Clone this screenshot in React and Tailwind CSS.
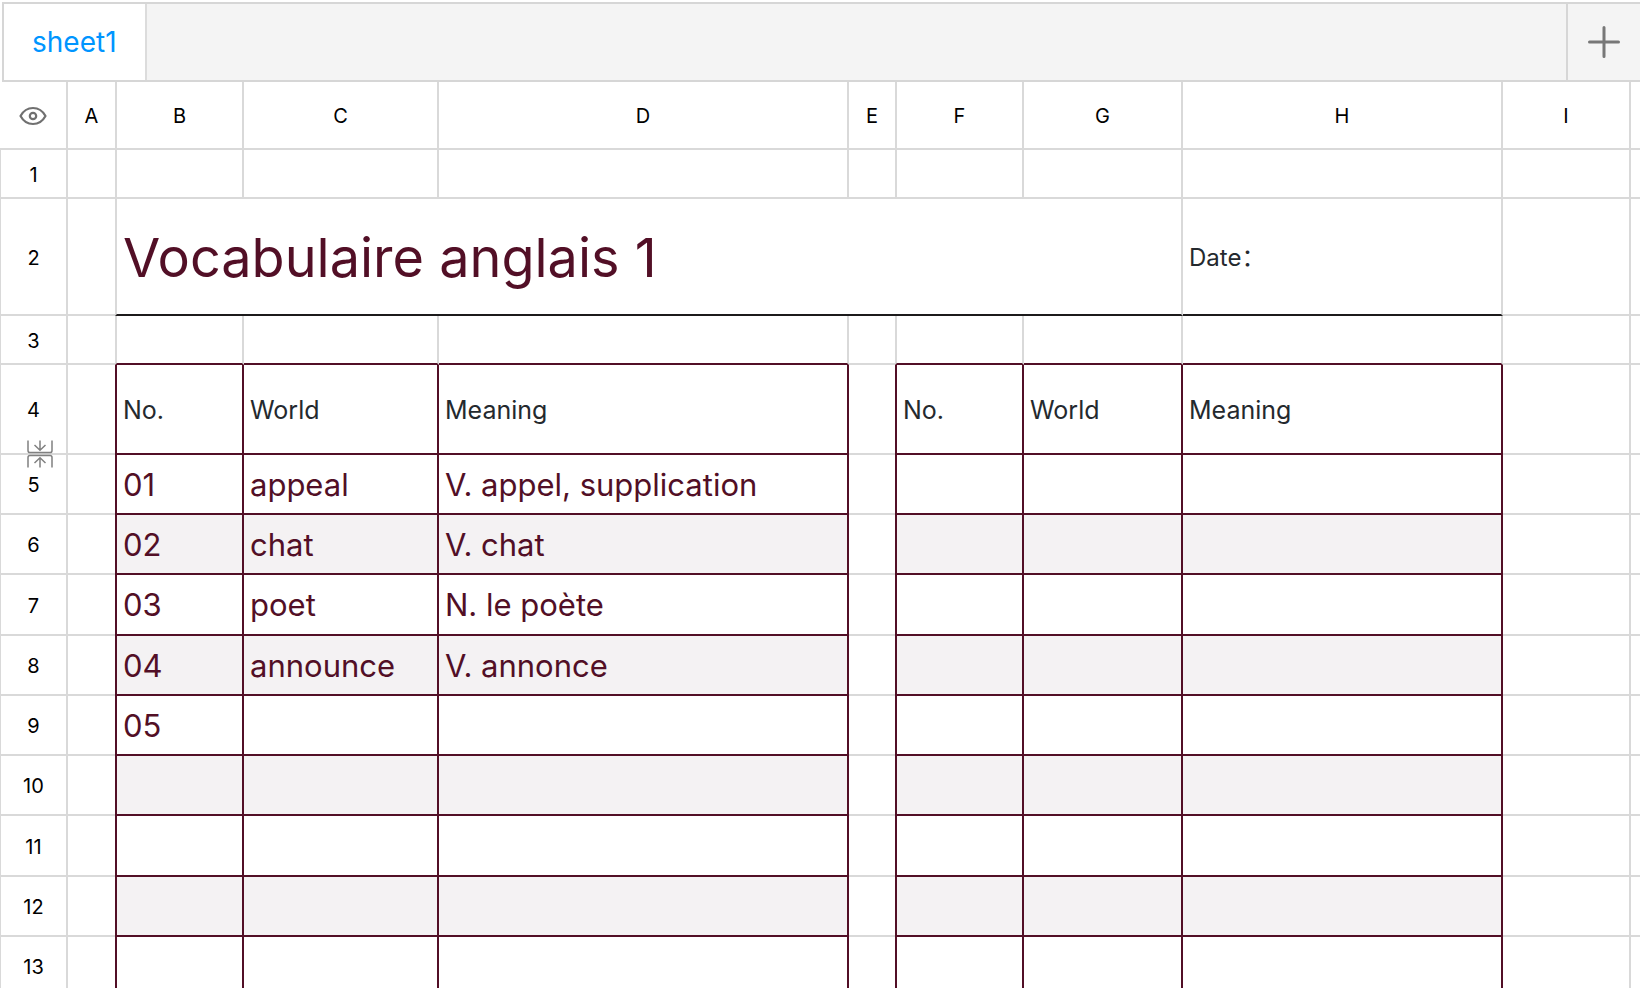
import { useState } from "react";

const columns = [
  { id: "A", width: 47 },
  { id: "B", width: 129 },
  { id: "C", width: 195 },
  { id: "D", width: 410 },
  { id: "E", width: 46 },
  { id: "F", width: 129 },
  { id: "G", width: 159 },
  { id: "H", width: 320 },
  { id: "I", width: 128 },
  { id: "", width: 120 },
];

const rowHeights = [49, 117, 49, 90, 60, 60, 61, 60, 60, 60, 61, 60, 60];

const cells = {
  B4: "No.",
  C4: "World",
  D4: "Meaning",
  F4: "No.",
  G4: "World",
  H4: "Meaning",
  B5: "01",
  C5: "appeal",
  D5: "V. appel, supplication",
  B6: "02",
  C6: "chat",
  D6: "V. chat",
  B7: "03",
  C7: "poet",
  D7: "N. le poète",
  B8: "04",
  C8: "announce",
  D8: "V. annonce",
  B9: "05",
};

const isListColumn = (col) => col !== "" && "BCDFGH".includes(col);

// B and F open a word list, so they own the line on their left; A and E leave it out
function edgeClass(col) {
  if (col === "A" || col === "E") return "border-b-2";
  if (col === "B" || col === "F") return "border-x-2 border-b-2";
  return "border-r-2 border-b-2";
}

function colorClass(col, row) {
  const list = isListColumn(col);
  let cls = "border-[#d9d9d9]";

  if (list && row >= 4) cls = "border-[#520f26]";
  if (list && row === 3) cls += " border-b-[#520f26]";
  if (list && row > 4 && row % 2 === 0) cls += " bg-[#f4f2f3]";
  cls += row === 4 ? " pt-0.5 text-[25px] text-[#24292e]" : " text-[31px] text-[#520f26]";
  return cls;
}

function EyeIcon() {
  return (
    <svg width="28" height="20" viewBox="0 0 28 20" fill="none" stroke="#707070" strokeWidth="2.200">
      <path d="M1.500 10C4.500 4.500 9 2 14 2s9.500 2.500 12.500 8C23.500 15.500 19 18 14 18S4.500 15.500 1.500 10Z" strokeLinejoin="round" />
      <circle cx="14" cy="10" r="3.200" />
    </svg>
  );
}

function FoldIcon() {
  return (
    <svg width="26" height="28" viewBox="0 0 26 28" fill="none" stroke="#808080" strokeWidth="1.500">
      <path d="M1 .5V10.500Q1 12.600 3 12.600H23Q25 12.600 25 10.500V.5" />
      <path d="M13 .5V10M7.500 5L13 10.200L18.500 5" />
      <path d="M1 27.500V17.500Q1 15.400 3 15.400H23Q25 15.400 25 17.500V27.500" />
      <path d="M13 27.500V18M7.500 23L13 17.800L18.500 23" />
    </svg>
  );
}

function TabBar({ sheets, active, onSelect, onAdd }) {
  return (
    <div className="ml-0.5 mt-0.5 flex h-20 shrink-0 border-y-2 border-l-2 border-[#d6d6d6] bg-[#f4f4f4]">
      {sheets.map((name) => (
        <button
          key={name}
          onClick={() => onSelect(name)}
          className={`border-r-2 border-[#dcdcdc] px-7 text-[28px] ${
            name === active ? "bg-white text-[#0095ff]" : "text-[#707070]"
          }`}
        >
          {name}
        </button>
      ))}
      <button
        onClick={onAdd}
        aria-label="Add sheet"
        className="ml-auto flex w-[74px] items-center justify-center border-l-2 border-[#d6d6d6]"
      >
        <svg width="32" height="32" viewBox="0 0 32 32" stroke="#777777" strokeWidth="3" strokeLinecap="round">
          <path d="M16 1.500V30.500M1.500 16H30.500" />
        </svg>
      </button>
    </div>
  );
}

function Row({ row, height }) {
  return (
    <tr style={{ height }}>
      <th className="relative border-r-2 border-b-2 border-l border-[#d9d9d9] pt-0.5 text-xl leading-none font-normal text-black">
        {row}
        {row === 5 && (
          <button aria-label="Fold rows" className="absolute -top-[15px] left-[26px]">
            <FoldIcon />
          </button>
        )}
      </th>
      {row === 2 ? (
        <>
          <td className="border-b-2 border-[#d9d9d9]"></td>
          <td
            colSpan={6}
            className="border-x-2 border-b-2 border-[#d9d9d9] border-b-[#1c1a1b] px-1.5 pt-0.5 text-[54px] leading-none whitespace-nowrap text-[#520f26]"
          >
            Vocabulaire anglais 1
          </td>
          <td className="border-r-2 border-b-2 border-[#d9d9d9] border-b-[#1c1a1b] px-1.5 pt-0.5 text-2xl leading-none text-[#24292e]">
            Date：
          </td>
          <td className="border-r-2 border-b-2 border-[#d9d9d9]"></td>
          <td className="border-r-2 border-b-2 border-[#d9d9d9]"></td>
        </>
      ) : (
        columns.map((col) => (
          <td
            key={col.id}
            className={`px-1.5 leading-none whitespace-nowrap ${edgeClass(col.id)} ${colorClass(col.id, row)}`}
          >
            {cells[col.id + row]}
          </td>
        ))
      )}
    </tr>
  );
}

export default function App() {
  const [sheets, setSheets] = useState(["sheet1"]);
  const [active, setActive] = useState("sheet1");

  const handleAdd = () => {
    const name = `sheet${sheets.length + 1}`;
    setSheets((prev) => [...prev, name]);
    setActive(name);
  };

  return (
    <div className="flex h-screen flex-col overflow-hidden bg-white font-['Inter','Noto_Sans_CJK_SC',sans-serif]">
      <TabBar sheets={sheets} active={active} onSelect={setActive} onAdd={handleAdd} />

      <div className="min-h-0 flex-1 overflow-hidden">
        <table className="w-0 table-fixed border-separate border-spacing-0">
          <colgroup>
            <col style={{ width: 68 }} />
            {columns.map((col) => (
              <col key={col.id} style={{ width: col.width }} />
            ))}
          </colgroup>
          <thead>
            <tr className="h-[68px]">
              <th className="border-r-2 border-b-2 border-[#d9d9d9] pt-0.5">
                <button aria-label="Show hidden cells" className="mx-auto block">
                  <EyeIcon />
                </button>
              </th>
              {columns.map((col) => (
                <th
                  key={col.id}
                  className={`border-[#d9d9d9] pt-0.5 text-xl leading-none font-normal text-black ${edgeClass(col.id)}`}
                >
                  {col.id}
                </th>
              ))}
            </tr>
          </thead>
          <tbody>
            {rowHeights.map((height, i) => (
              <Row key={i} row={i + 1} height={height} />
            ))}
          </tbody>
        </table>
      </div>
    </div>
  );
}
